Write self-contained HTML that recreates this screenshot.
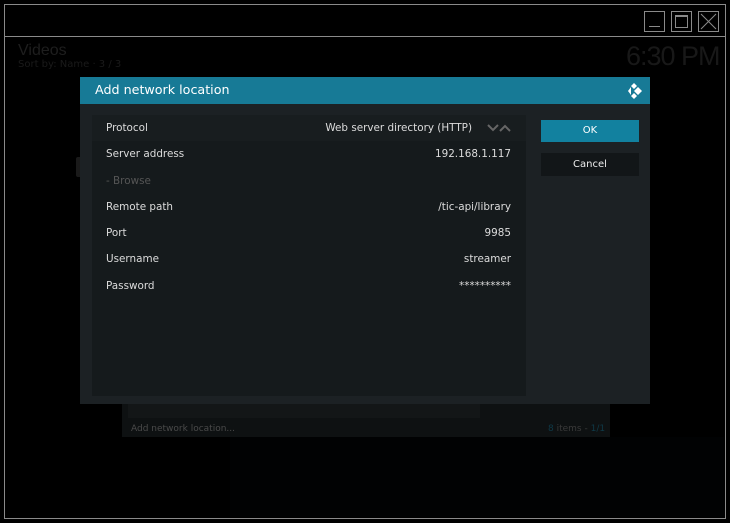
<!DOCTYPE html>
<html><head><meta charset="utf-8"><style>
*{margin:0;padding:0;box-sizing:border-box}
body{width:730px;height:523px;background:#000;position:relative;overflow:hidden;font-family:"DejaVu Sans","Liberation Sans",sans-serif}
.a{position:absolute}
.frame{left:4px;top:4px;width:722px;height:515px;border:1px solid #8a8a8a}
.tline{left:4px;top:36px;width:722px;height:1px;background:#8a8a8a}
.wb{top:11px;width:21px;height:21px;border:1px solid #8a8a8a}
.row{left:106px;font-size:10.4px;color:#dcdcdc}
.val{right:219px;font-size:10.4px;color:#dcdcdc;text-align:right}
</style></head><body>
<div class="a frame"></div>
<div class="a tline"></div>
<div class="a wb" style="left:644px"><div class="a" style="left:4px;top:14px;width:11px;height:1px;background:#8a8a8a"></div></div>
<div class="a wb" style="left:671px"><div class="a" style="left:3px;top:3px;width:13px;height:13px;border:1px solid #8a8a8a;border-top-width:2px"></div></div>
<div class="a wb" style="left:698px"><svg class="a" style="left:0;top:0" width="19" height="19"><path d="M2 2L17 17M17 2L2 17" stroke="#8a8a8a" stroke-width="1"/></svg></div>
<div class="a" style="left:18px;top:42px;font-size:16px;color:#1e1e1e;font-family:'Liberation Sans',sans-serif">Videos</div>
<div class="a" style="left:18px;top:59px;font-size:10px;color:#1a1a1a">Sort by: Name · 3 / 3</div>
<div class="a" style="left:626px;top:41px;font-size:27px;color:#181818;font-family:'Liberation Sans',sans-serif;letter-spacing:-1px">6:30 PM</div>
<div class="a" style="left:76px;top:157px;width:6px;height:20px;background:#1a1a1a;border-radius:2px"></div>
<div class="a" style="left:230px;top:437px;width:494px;height:80px;background:#010203"></div>
<div class="a" style="left:122px;top:395px;width:488px;height:42px;background:#0e1112"></div>
<div class="a" style="left:128px;top:395px;width:352px;height:23px;background:#131617"></div>
<div class="a" style="left:131px;top:424px;font-size:9px;color:#4a4a4a">Add network location...</div>
<div class="a" style="left:548px;top:424px;font-size:9px;color:#3a3a3a"><span style="color:#0f3a48">8</span> items - <span style="color:#0f3a48">1/1</span></div>
<div class="a" style="left:80px;top:77px;width:570px;height:327px;background:#1c2124"></div>
<div class="a" style="left:80px;top:77px;width:570px;height:27px;background:#177a96"></div>
<div class="a" style="left:95px;top:82px;font-size:12.7px;color:#fff">Add network location</div>
<svg class="a" style="left:624px;top:81px" width="20" height="20"><path d="M4 10L7 6V14Z M10 2L13 5L10 8L7 5Z M14 6L18 10L14 14L10 10Z M10 12L13 15L10 18L7 15Z" fill="#fff"/></svg>
<div class="a" style="left:92px;top:115px;width:434px;height:281px;background:#151a1c"></div>
<div class="a" style="left:92px;top:115px;width:434px;height:26px;background:#181d1f"></div>
<div class="a row" style="top:122px">Protocol</div>
<div class="a row" style="top:148px">Server address</div>
<div class="a row" style="top:175px;color:#555">- Browse</div>
<div class="a row" style="top:201px">Remote path</div>
<div class="a row" style="top:227px">Port</div>
<div class="a row" style="top:253px">Username</div>
<div class="a row" style="top:280px">Password</div>
<div class="a" style="right:258px;top:122px;font-size:10.4px;color:#dcdcdc">Web server directory (HTTP)</div>
<svg class="a" style="left:487px;top:123px" width="25" height="10"><path d="M1 2L6 7L11 2 M13 8L18 3L23 8" stroke="#666" stroke-width="2" fill="none"/></svg>
<div class="a val" style="top:148px">192.168.1.117</div>
<div class="a val" style="top:201px">/tic-api/library</div>
<div class="a val" style="top:227px">9985</div>
<div class="a val" style="top:253px">streamer</div>
<div class="a val" style="top:280px">**********</div>
<div class="a" style="left:541px;top:120px;width:98px;height:22px;background:#12819f;color:#fff;font-size:10px;text-align:center;line-height:22px">OK</div>
<div class="a" style="left:541px;top:153px;width:98px;height:23px;background:#121618;color:#eee;font-size:10px;text-align:center;line-height:23px">Cancel</div>
</body></html>
